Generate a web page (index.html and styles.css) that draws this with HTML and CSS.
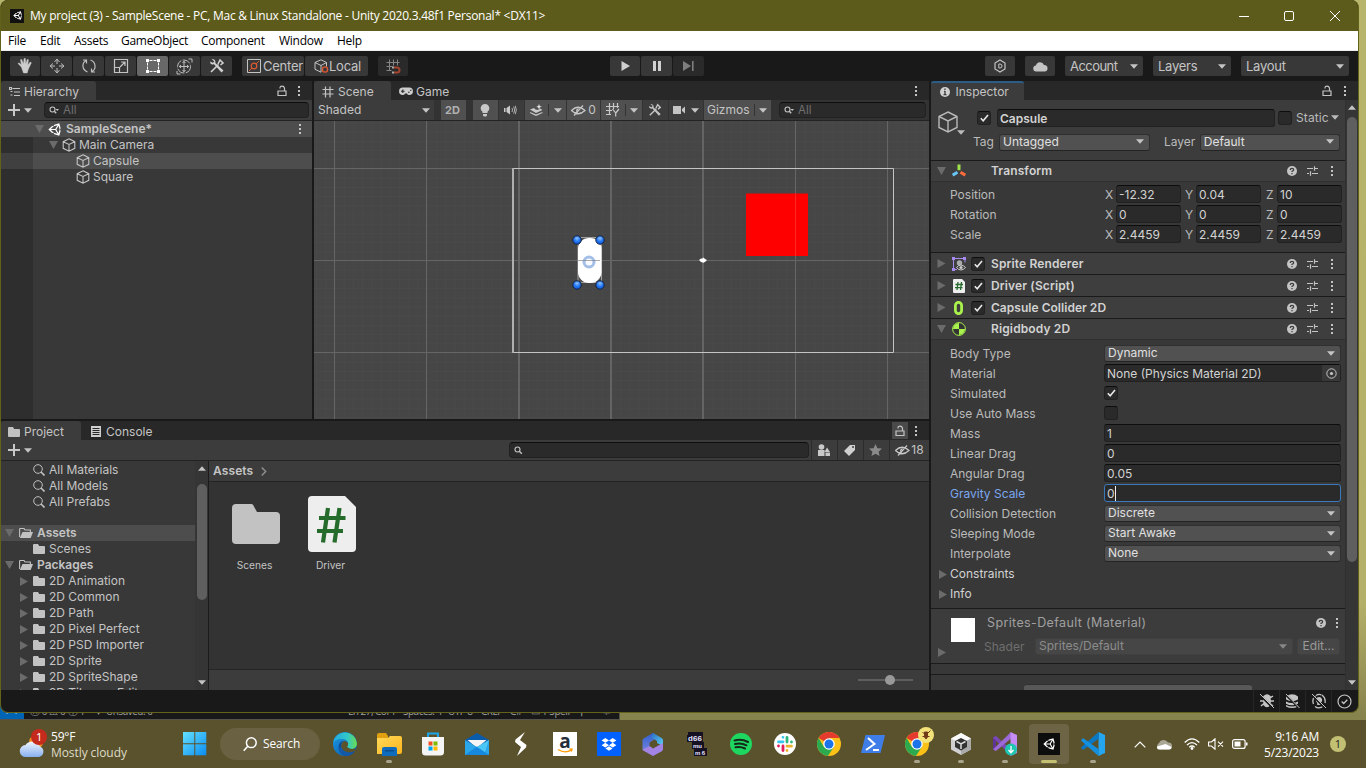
FILE: index.html
```html
<!DOCTYPE html>
<html lang="en">
<head>
<meta charset="utf-8">
<title>My project (3) - SampleScene</title>
<link rel="stylesheet" href="styles.css">
</head>
<body>
<svg class="defs" width="0" height="0">
  <symbol id="cube" viewBox="0 0 14 14"><path d="M7 .8 12.800 3.700V10.300L7 13.200 1.200 10.300V3.700ZM1.200 3.700 7 6.500l5.800-2.800M7 6.500v6.700" fill="none" stroke="currentColor" stroke-width="1.100"/></symbol>
  <symbol id="lock" viewBox="0 0 10 12"><path d="M1 6h8v4.500H1zM3 3.500V2.700Q3 1.200 5 1.200T7.500 3.200V6" fill="none" stroke="currentColor" stroke-width="1.200"/></symbol>
  <symbol id="dots" viewBox="0 0 4 12"><path d="M1 1h2v2H1zM1 5h2v2H1zM1 9h2v2H1z" fill="currentColor"/></symbol>
  <symbol id="down" viewBox="0 0 8 5"><path d="M0 .3h8L4 4.800z" fill="currentColor"/></symbol>
  <symbol id="up" viewBox="0 0 8 5"><path d="M0 4.700h8L4 .2z" fill="currentColor"/></symbol>
  <symbol id="open" viewBox="0 0 9 8"><path d="M0 0h9L4.500 8z" fill="#6b6b6b"/></symbol>
  <symbol id="shut" viewBox="0 0 8 9"><path d="M0 0v9l8-4.500z" fill="#6b6b6b"/></symbol>
  <symbol id="folder" viewBox="0 0 12 10"><path d="M0 1q0-1 1-1h4l1.200 2H11q1 0 1 1v6q0 1-1 1H1q-1 0-1-1z" fill="#c2c2c2"/></symbol>
  <symbol id="folderopen" viewBox="0 0 14 10"><path d="M.6 9V1.200q0-.7.7-.7H5l1 1.500h5.400V4" fill="none" stroke="#c2c2c2" stroke-width="1.100"/><path d="M3.500 4H14l-2.300 6H.8z" fill="#c2c2c2"/></symbol>
  <symbol id="mag" viewBox="0 0 12 12"><circle cx="5" cy="5" r="4.300" fill="none" stroke="#c2c2c2"/><path d="m8 8 3.500 3.500" stroke="#c2c2c2" stroke-width="1.600"/></symbol>
  <symbol id="smagd" viewBox="0 0 10 9"><circle cx="3.500" cy="3.500" r="2.500" fill="none" stroke="#c4c4c4" stroke-width="1.100"/><path d="m5.300 5.300 1.900 2" stroke="#c4c4c4" stroke-width="1.400"/><path d="M6.500 3H10L8.200 5z" fill="#c4c4c4"/></symbol>
  <symbol id="smag" viewBox="0 0 9 9"><circle cx="3.500" cy="3.500" r="2.500" fill="none" stroke="#c4c4c4" stroke-width="1.100"/><path d="m5.300 5.300 2.500 2.500" stroke="#c4c4c4" stroke-width="1.400"/></symbol>
  <symbol id="check" viewBox="0 0 9 8"><path d="m.8 4.200 2.400 2.500L8 1" fill="none" stroke="#e8e8e8" stroke-width="1.600"/></symbol>
  <symbol id="help" viewBox="0 0 10 10"><circle cx="5" cy="5" r="5" fill="#c4c4c4"/><path d="M3.300 4Q3.300 2.300 5 2.300T6.700 3.800Q6.700 4.700 5 5.400V6M5 7v1.200" fill="none" stroke="#3c3c3c" stroke-width="1.200"/></symbol>
  <symbol id="preset" viewBox="0 0 11 10"><path d="M0 2.500h6M8 2.500h3M7.500.2v4.600M0 7.500h2M5 7.500h6M3.500 5.200v4.600" stroke="#c4c4c4" stroke-width="1.200" fill="none"/></symbol>
  <symbol id="plus" viewBox="0 0 12 12"><path d="M6 0v12M0 6h12" stroke="#c8c8c8" stroke-width="2"/></symbol>
  <symbol id="grid" viewBox="0 0 12 12"><path d="M3.500.5v11M8 .5v11M.5 3.500h11M.5 8h11" stroke="currentColor" stroke-width="1.200"/></symbol>
  <symbol id="tools" viewBox="0 0 16 16"><path d="M2 14 9.500 6.500M9 6l2-4 3 3-2.500 2" stroke="currentColor" stroke-width="1.600" fill="none"/><path d="m2.600 1 2.700 2.500-1.300 1.300L1 3.500Q1 6 3.400 6.500L5 6.300l7.500 8.200 2-2L6.400 5Q7 1 2.600 1z" fill="currentColor"/></symbol>
  <symbol id="unity" viewBox="0 0 512 512"><path fill="currentColor" fill-rule="evenodd" d="M498.100 206.400 445.300 14.700 248.200 66.100 219 116.100l-59.200-.4L15.500 256l144.300 140.300 59.200-.4 29.200 50 197.100 51.400 52.800-191.600-30-49.700ZM223.800 124.200l150.700-37.700L288 232.300H114.900Zm0 263.600L114.900 279.700H288l86.500 145.800Zm193 14L330.200 256l86.600-145.800L458.600 256Z"/></symbol>
  <symbol id="chrome" viewBox="0 0 24 24"><circle cx="12" cy="12" r="12" fill="#fbc116"/><path d="M12 12 1.600 6A12 12 0 0 1 22.400 6H12z" fill="#e33b2e"/><path d="M1.600 6a12 12 0 0 0 9.300 18L17 14.800 12 12 6.700 14.600z" fill="#2da94f"/><circle cx="12" cy="12" r="5.800" fill="#fff"/><circle cx="12" cy="12" r="4.500" fill="#1a73e8"/></symbol>
  <linearGradient id="blue" x1="0" y1="0" x2="1" y2="1"><stop stop-color="#64e1ff"/><stop offset="1" stop-color="#0b8cf0"/></linearGradient>
  <linearGradient id="sky" x1="0" y1="0" x2="0" y2="1"><stop stop-color="#f0f5ff"/><stop offset="1" stop-color="#87b0ee"/></linearGradient>
  <linearGradient id="yel" x1="0" y1="0" x2="1" y2="1"><stop stop-color="#ffd95a"/><stop offset="1" stop-color="#fcb51c"/></linearGradient>
  <linearGradient id="edgeA" x1="0" y1="0" x2="1" y2="0"><stop stop-color="#23a9df"/><stop offset=".6" stop-color="#33c8c9"/><stop offset="1" stop-color="#6bdc4c"/></linearGradient>
  <linearGradient id="edgeB" x1="0" y1="0" x2="1" y2="1"><stop stop-color="#1b9ee8"/><stop offset="1" stop-color="#0b4fa0"/></linearGradient>
  <linearGradient id="m365a" x1="0" y1="0" x2="0" y2="1"><stop stop-color="#2f62cc"/><stop offset="1" stop-color="#6f7fe0"/></linearGradient>
  <linearGradient id="m365b" x1="0" y1="0" x2="1" y2="1"><stop stop-color="#2c6fc4"/><stop offset="1" stop-color="#5cd0f5"/></linearGradient>
  <radialGradient id="ball" cx=".5" cy=".3" r=".8"><stop stop-color="#8cc0ff"/><stop offset=".5" stop-color="#1f74f0"/><stop offset="1" stop-color="#0a50d8"/></radialGradient>
  <pattern id="fine" x="334.500" y="168.500" width="9.220" height="9.200" patternUnits="userSpaceOnUse"><path d="M0 .5h9.220M.5 0v9.200" stroke="#494949"/></pattern>
</svg>

<div class="desktop">
  <div class="backwin">
    <div class="remote">&gt;&lt;</div>
    <span class="bw1">ⓧ 0 ⚠ 0 ⓘ 1</span><span class="bw2">▾</span><span class="bw3">Unsaved: 0</span>
    <span class="bw4">Ln 27, Col 1</span><span class="bw5">Spaces: 4</span><span class="bw6">UTF-8</span><span class="bw7">CRLF</span><span class="bw8">C#</span><span class="bw9">▭ 1 Spell</span><span class="bw10">⚲</span><span class="bw11">♧</span>
  </div>

  <div class="window">
    <header class="title">
      <span class="appicon"><svg width="9" height="9"><use href="#unity"/></svg></span>
      <span class="title-text">My project (3) - SampleScene - PC, Mac &amp; Linux Standalone - Unity 2020.3.48f1 Personal* &lt;DX11&gt;</span>
      <svg class="winbtns" width="102" height="12" viewBox="0 0 102 12" fill="none" stroke="#fff"><path d="M0 6.500h10"/><rect x="45.500" y="1.500" width="9" height="9" rx="1.500"/><path d="m91 1 10 10M101 1 91 11"/></svg>
    </header>
    <nav class="menu"><span class="m1">File</span><span class="m2">Edit</span><span class="m3">Assets</span><span class="m4">GameObject</span><span class="m5">Component</span><span class="m6">Window</span><span class="m7">Help</span></nav>

    <div class="toolbar">
      <div class="group">
        <span class="tb w30"><svg width="16" height="16" viewBox="0 0 16 16"><path d="M4.300 9 1 5.600l1-.8 2.500 2L3.400 1.700l1.300-.3L6.500 6 7 .5h1.400L8.700 6l1.500-4.600 1.300.3-.8 5.300 2.500-3 1.200.8-3 6.200-1.200 4H6.500Z" fill="#cdcdcd" stroke="#cdcdcd" stroke-width=".4"/></svg></span>
        <span class="tb w31"><svg width="16" height="16" viewBox="0 0 16 16"><path d="M8 2v4M8 10v4M2 8h4M10 8h4M5.500 4 8 1l2.500 3M5.500 12 8 15l2.500-3M4 5.500 1 8l3 2.500M12 5.500 15 8l-3 2.500" stroke="#bdbdbd" fill="none"/></svg></span>
        <span class="tb w31"><svg width="16" height="16" viewBox="0 0 16 16"><path d="M6.500 14C1 12 .500 5 5 2.500M2 2h3.500v3.500M9.500 2c5.500 2 6 9 1.500 11.500M14 14h-3.500v-3.500" stroke="#bdbdbd" stroke-width="1.200" fill="none"/></svg></span>
        <span class="tb w31"><svg width="16" height="16" viewBox="0 0 16 16"><path d="M1.500 1.500h13v13h-13zM1.500 9.500h5v5M7 9l4.500-4.500M8 4h4v4" stroke="#c4c4c4" stroke-width="1.200" fill="none"/></svg></span>
        <span class="tb w31 sel"><svg width="16" height="16" viewBox="0 0 16 16"><path d="M4.500 2.500h7M4.500 13.500h7M2.500 4.500v7M13.500 4.500v7" stroke="#fff" stroke-dasharray="3 1"/><path d="M1 1h3v3H1zM12 1h3v3h-3zM1 12h3v3H1zM12 12h3v3h-3z" fill="#fff"/></svg></span>
        <span class="tb w31"><svg width="17" height="17" viewBox="0 0 17 17"><g fill="none" stroke="#bdbdbd"><circle cx="8" cy="8.500" r="6.500" stroke-dasharray="8 1.500"/><path d="M8 3v11M3 8.500h10M6.500 5 8 3.300 9.500 5M6.500 12 8 13.700 9.500 12M5 7 3.300 8.500 5 10M11 7l1.700 1.500L11 10M12.500 1H16v3.500M1 13v3h3.500"/></g></svg></span>
        <span class="tb w31"><svg class="bright" width="16" height="16"><use href="#tools"/></svg></span>
        <span class="tb pivot"><svg width="14" height="14" viewBox="0 0 14 14"><path d="M.5.500h13v13H.5z" fill="none" stroke="#c4c4c4"/><path d="m2 12 10-10" stroke="#df5a32"/><circle cx="7" cy="7" r="2.800" fill="#383838" stroke="#df5a32" stroke-width="1.200"/></svg><b>Center</b></span>
        <span class="tb local"><svg width="15" height="14" viewBox="0 0 15 14"><path d="M7 .8 12.500 3.500v4M7 13.200 1 10.300V3.500L7 .8M1 3.500 7 6.500l5.500-3M7 6.500v6.700" stroke="#c4c4c4" fill="none"/><circle cx="11" cy="10.500" r="2.600" fill="none" stroke="#df5a32" stroke-width="1.400"/></svg><b>Local</b></span>
        <span class="tb snap"><svg width="15" height="15" viewBox="0 0 15 15"><path d="M3.500.5v11M7.500.500v6M11.500.5v6M.5 3.500h13M.5 7.500h6M.5 11.500h5" stroke="#858585" fill="none"/><path d="M8 8.500h3a2.200 2.200 0 0 1 0 5H8" fill="none" stroke="#a14430" stroke-width="2"/><path d="M6 7.500h2v2H6zM6 12.500h2v2H6z" fill="#aaa"/></svg></span>
      </div>
      <div class="group play">
        <span class="tb w30"><svg width="9" height="10" viewBox="0 0 9 10"><path d="M.5 0v10L9 5z" fill="#d0d0d0"/></svg></span>
        <span class="tb w31"><svg width="8" height="10" viewBox="0 0 8 10"><path d="M0 0h3v10H0zM5 0h3v10H5z" fill="#d0d0d0"/></svg></span>
        <span class="tb w31 dim"><svg width="11" height="10" viewBox="0 0 11 10"><path d="M0 0v10l8-5zM9 0h1.600v10H9z" fill="#7e7e7e"/></svg></span>
      </div>
      <div class="group right">
        <span class="tb w30"><svg width="12" height="14" viewBox="0 0 12 14"><path d="m6 1 5 3v6l-5 3-5-3V4z" fill="none" stroke="#c4c4c4" stroke-width="1.200"/><path d="M4.800 5H6a2 2 0 0 1 0 4H4.800z" fill="none" stroke="#c4c4c4"/></svg></span>
        <span class="tb w30"><svg width="15" height="11" viewBox="0 0 15 11"><path d="M3.500 10.500a3 3 0 0 1-.5-6A4.200 4.200 0 0 1 11 4a3.300 3.300 0 0 1 1 6.500z" fill="#c4c4c4"/></svg></span>
        <span class="tb dd w78"><b class="acc">Account</b><svg width="8" height="5"><use href="#down"/></svg></span>
        <span class="tb dd w78"><b>Layers</b><svg width="8" height="5"><use href="#down"/></svg></span>
        <span class="tb dd w108"><b>Layout</b><svg width="8" height="5"><use href="#down"/></svg></span>
      </div>
    </div>

    <main class="dock">
      <div class="leftcol">
        <div class="toprow">
          <section class="hier">
            <div class="tabs">
              <span class="tab th"><svg width="12" height="10" viewBox="0 0 12 10"><path d="M3.500 1.500H11M5 5h6M5 8.500h6M.5.500h2v2h-2zM1.500 4.500h2M1.500 8h2" stroke="#c4c4c4" fill="none" stroke-width="1.100"/></svg>Hierarchy</span>
              <span class="tabend"><svg width="10" height="12"><use href="#lock"/></svg><svg width="4" height="12"><use href="#dots"/></svg></span>
            </div>
            <div class="bar">
              <svg class="add" width="12" height="12"><use href="#plus"/></svg><svg class="addc" width="8" height="5"><use href="#down"/></svg>
              <span class="search hs"><svg width="10" height="9"><use href="#smagd"/></svg>All</span>
            </div>
            <div class="hrows">
              <div class="hrow lit h0"><svg width="9" height="8"><use href="#open"/></svg><svg class="white" width="13" height="13"><use href="#unity"/></svg><strong>SampleScene*</strong><svg class="rowdots" width="4" height="12"><use href="#dots"/></svg></div>
              <div class="hrow h1"><svg width="9" height="8"><use href="#open"/></svg><svg width="14" height="14"><use href="#cube"/></svg>Main Camera</div>
              <div class="hrow h2 lit2"><svg width="14" height="14"><use href="#cube"/></svg>Capsule</div>
              <div class="hrow h2"><svg width="14" height="14"><use href="#cube"/></svg>Square</div>
            </div>
          </section>

          <section class="scene">
            <div class="tabs">
              <span class="tab ts"><svg width="12" height="12"><use href="#grid"/></svg>Scene</span>
              <span class="tab off tg"><svg width="14" height="9" viewBox="0 0 14 9"><path d="M3.800.5h6.400a3.600 3.600 0 0 1 0 7.500Q8.500 8 8 6.500H6Q5.500 8 3.800 8a3.600 3.600 0 0 1 0-7.500z" fill="#cdcdcd"/><path d="M2 4.200h3.600M3.800 2.400V6M9 5.200h1.600M11 3.200h1.500" stroke="#282828" stroke-width="1.100"/></svg>Game</span>
              <span class="tabend one"><svg width="4" height="12"><use href="#dots"/></svg></span>
            </div>
            <div class="bar sbar">
              <span class="sb shaded">Shaded<svg width="8" height="5"><use href="#down"/></svg></span>
              <span class="sb on two">2D</span>
              <span class="sb on lamp"><svg width="10" height="13" viewBox="0 0 10 13"><path d="M5 0a4.300 4.300 0 0 1 2.500 7.800V9h-5V7.800A4.300 4.300 0 0 1 5 0zM3 10h4v1.500L6 12.500H4L3 11.500z" fill="#c9c9c9"/></svg></span>
              <span class="sb s25"><svg width="13" height="10" viewBox="0 0 13 10"><path d="M0 3h1.500v4H0zM2.500 3 6 .500v9L2.500 7z" fill="#c9c9c9"/><path d="M8 3q1 2 0 4M9.700 1.500q2 3.500 0 7M11.300.800q2 4.200 0 8.400" stroke="#b0b0b0" fill="none"/></svg></span>
              <span class="sb on s41"><svg width="13" height="12" viewBox="0 0 13 12"><path d="m0 5.500 4-1.500 1.500 1.500L8 6l2-1.500L12.500 6 6 9zM0 8l6 2.500L12.500 8v1L6 12 0 9z" fill="#c9c9c9"/><path d="m9 0 .8 2 2 .8-2 .8L9 5.600l-.8-2-2-.8 2-.8z" fill="#e0e0e0"/></svg><i></i><svg width="8" height="5"><use href="#down"/></svg></span>
              <span class="sb on s33"><svg width="15" height="11" viewBox="0 0 15 11"><path d="M.5 5.500Q7 -1 14 5.500 7 12 .5 5.500zM3 10.500 12 .5" fill="none" stroke="#c9c9c9" stroke-width="1.200"/><path d="M5 6.500q0-3.300 3-3.300L5.500 7z" fill="#c9c9c9"/></svg>0</span>
              <span class="sb on s41"><svg width="14" height="14" viewBox="0 0 14 14"><path d="M3.500 0v11M7.500 0v6M11.500 0v5M0 3.500h13M0 7.500h6M0 11.500h5M6.500 6l3.200 4v3.500M13 6 9.700 10" stroke="#c9c9c9" stroke-width="1.200" fill="none"/></svg><i></i><svg width="8" height="5"><use href="#down"/></svg></span>
              <span class="sb s25 tl"><svg width="14" height="14"><use href="#tools"/></svg></span>
              <span class="sb s34"><svg width="12" height="8" viewBox="0 0 12 8"><path d="M0 0h8v8H0zM9 3l3-2.500v7L9 5z" fill="#c4c4c4"/></svg><svg width="8" height="5"><use href="#down"/></svg></span>
              <span class="sb on giz">Gizmos<i></i><svg width="8" height="5"><use href="#down"/></svg></span>
              <span class="search ss"><svg width="10" height="9"><use href="#smagd"/></svg>All</span>
            </div>
            <svg class="view" width="615" height="298" viewBox="314 121 615 298">
              <rect x="314" y="121" width="615" height="298" fill="#464646"/>
              <rect x="314" y="121" width="615" height="298" fill="url(#fine)"/>
              <path d="M334.500 121v298M426.500 121v298M795.500 121v298M887.500 121v298M314 168.500h615M314 260.500h615M314 352.500h615" stroke="#656565"/>
              <path d="M519 121v298M611 121v298M703 121v298" stroke="#646464" stroke-width="2"/>
              <rect x="746" y="193.500" width="62" height="62.500" fill="#f00"/><path d="M795.500 193v63" stroke="#ff2626"/>
              <path d="M513 168.500H893.500V352.500H513" fill="none" stroke="#c4c4c4"/><path d="M513 168v185" stroke="#b0b0b0" stroke-width="2"/>
              <rect x="578" y="237.500" width="23.500" height="45" fill="#505050" stroke="#a0a0a0"/>
              <rect x="578" y="238" width="23.500" height="45" rx="11" fill="#fff"/>
              <circle cx="589" cy="262" r="5" fill="#f8fafd" stroke="#a3bfe8" stroke-width="3"/>
              <path d="M578 260.500h22" stroke="#777" stroke-opacity=".6"/>
              <g fill="url(#ball)" stroke="#14233f"><circle cx="577" cy="240" r="4.200"/><circle cx="600" cy="240" r="4.200"/><circle cx="577" cy="285" r="4.200"/><circle cx="600" cy="285" r="4.200"/></g>
              <path d="m699 260 2-1.500h1.500l1-1 1.500 1.500 2 1-1.500 1.500-2 1.200-2.500-.8z" fill="#fff"/>
            </svg>
          </section>
        </div>

        <section class="project">
          <div class="tabs">
            <span class="tab tp"><svg width="12" height="10"><use href="#folder"/></svg>Project</span>
            <span class="tab off tc"><svg width="10" height="11" viewBox="0 0 10 11"><path d="M0 0h10v11H0z" fill="#d0d0d0"/><path d="M1.500 2.500h7M1.500 4.500h7M1.500 6.500h7M1.500 8.500h7" stroke="#282828"/></svg>Console</span>
            <span class="tabend pl"><em><svg width="10" height="12"><use href="#lock"/></svg></em><svg width="4" height="12"><use href="#dots"/></svg></span>
          </div>
          <div class="bar">
            <svg class="add" width="12" height="12"><use href="#plus"/></svg><svg class="addc" width="8" height="5"><use href="#down"/></svg>
            <span class="search ps"><svg width="9" height="9"><use href="#smag"/></svg></span>
            <span class="pbtn"><svg width="12" height="12" viewBox="0 0 12 12"><circle cx="3.500" cy="3" r="2.800" fill="#c9c9c9"/><path d="M0 6h6.500v6H0zM9 3.500l3 4.500H6.500zM7.500 8.500H12V12H7.500z" fill="#c9c9c9"/></svg></span>
            <span class="pbtn"><svg width="12" height="12" viewBox="0 0 12 12"><path d="M6 1h5v5L5 12 0 7z" fill="#d0d0d0"/><circle cx="9" cy="3" r="1" fill="#3c3c3c"/></svg></span>
            <span class="pbtn"><svg width="13" height="12" viewBox="0 0 13 12"><path d="m6.500 0 1.900 4.200 4.600.4L9.600 7.700l1 4.300-4.100-2.300L2.400 12l1-4.300L0 4.600l4.600-.4z" fill="#8a8a8a"/></svg></span>
            <span class="pbtn eye"><svg width="15" height="11" viewBox="0 0 15 11"><path d="M.5 5.500Q7 -1 14 5.500 7 12 .5 5.500zM3 10.500 12 .5" fill="none" stroke="#c9c9c9" stroke-width="1.200"/><path d="M5 6.500q0-3.300 3-3.300L5.500 7z" fill="#c9c9c9"/></svg>18</span>
          </div>
          <div class="pbody">
            <div class="tree">
              <div class="tr t1"><svg width="12" height="12"><use href="#mag"/></svg>All Materials</div>
              <div class="tr t1"><svg width="12" height="12"><use href="#mag"/></svg>All Models</div>
              <div class="tr t1"><svg width="12" height="12"><use href="#mag"/></svg>All Prefabs</div>
              <div class="tr t0 lit first"><svg width="9" height="8"><use href="#open"/></svg><svg width="14" height="10"><use href="#folderopen"/></svg><strong>Assets</strong></div>
              <div class="tr t1"><svg width="12" height="10"><use href="#folder"/></svg>Scenes</div>
              <div class="tr t0"><svg width="9" height="8"><use href="#open"/></svg><svg width="14" height="10"><use href="#folderopen"/></svg><strong>Packages</strong></div>
              <div class="tr t2"><svg width="8" height="9"><use href="#shut"/></svg><svg width="12" height="10"><use href="#folder"/></svg>2D Animation</div>
              <div class="tr t2"><svg width="8" height="9"><use href="#shut"/></svg><svg width="12" height="10"><use href="#folder"/></svg>2D Common</div>
              <div class="tr t2"><svg width="8" height="9"><use href="#shut"/></svg><svg width="12" height="10"><use href="#folder"/></svg>2D Path</div>
              <div class="tr t2"><svg width="8" height="9"><use href="#shut"/></svg><svg width="12" height="10"><use href="#folder"/></svg>2D Pixel Perfect</div>
              <div class="tr t2"><svg width="8" height="9"><use href="#shut"/></svg><svg width="12" height="10"><use href="#folder"/></svg>2D PSD Importer</div>
              <div class="tr t2"><svg width="8" height="9"><use href="#shut"/></svg><svg width="12" height="10"><use href="#folder"/></svg>2D Sprite</div>
              <div class="tr t2"><svg width="8" height="9"><use href="#shut"/></svg><svg width="12" height="10"><use href="#folder"/></svg>2D SpriteShape</div>
              <div class="tr t2"><svg width="8" height="9"><use href="#shut"/></svg><svg width="12" height="10"><use href="#folder"/></svg>2D Tilemap Editor</div>
            </div>
            <div class="scroll"><svg width="8" height="5"><use href="#up"/></svg><i class="thumb tt"></i><svg width="8" height="5"><use href="#down"/></svg></div>
            <div class="assets">
              <div class="crumb"><strong>Assets</strong><svg width="6" height="9" viewBox="0 0 6 9"><path d="m.7.500 4 4-4 4" fill="none" stroke="#8c8c8c" stroke-width="1.500"/></svg></div>
              <div class="tiles">
                <figure><svg width="48" height="56" viewBox="0 0 48 56"><path d="M0 12q0-4 4-4h15.500q1 0 1.500.8L25 16h19q4 0 4 4v24q0 4-4 4H4q-4 0-4-4z" fill="#c2c2c2"/></svg><figcaption>Scenes</figcaption></figure>
                <figure><svg width="48" height="56" viewBox="0 0 48 56"><path d="M0 4q0-4 4-4h33l11 11v41q0 4-4 4H4q-4 0-4-4z" fill="#eee"/><path d="m20 12-5 34.500M31.500 12l-5 34.500M11 22h26.500M9 35h26" stroke="#256b2b" stroke-width="4.200" fill="none"/></svg><figcaption>Driver</figcaption></figure>
              </div>
              <div class="foot"><svg width="56" height="12" viewBox="0 0 56 12"><path d="M0 6h55" stroke="#5e5e5e" stroke-width="2"/><circle cx="32" cy="6" r="5" fill="#999"/></svg></div>
            </div>
          </div>
        </section>
      </div>

      <section class="insp">
        <div class="tabs">
          <span class="tab ti"><svg width="10" height="10" viewBox="0 0 10 10"><circle cx="5" cy="5" r="5" fill="#d0d0d0"/><path d="M5 1.500v1.500M5 4v3.500M3.500 7.700h3M4 4.300h1" stroke="#3c3c3c" stroke-width="1.300"/></svg>Inspector</span>
          <span class="tabend il"><svg width="10" height="12"><use href="#lock"/></svg><svg width="4" height="12"><use href="#dots"/></svg></span>
        </div>
        <div class="ibody">
          <div class="icontent">
            <div class="obj">
              <div class="objicon"><svg width="20" height="22" viewBox="0 0 20 22"><path d="m10 1 9 4.500v11L10 21l-9-4.500v-11ZM1 5.500l9 4.500 9-4.500M10 10v11" fill="none" stroke="#b8b8b8" stroke-width="1.400"/></svg><svg class="oc" width="8" height="5"><use href="#down"/></svg></div>
              <div class="objmain">
                <div class="o1"><span class="cb"><svg width="9" height="8"><use href="#check"/></svg></span><span class="fld name"><strong>Capsule</strong></span><span class="cb"></span><span class="static">Static</span><svg width="8" height="5"><use href="#down"/></svg></div>
                <div class="o2"><label>Tag</label><span class="drop tagd">Untagged<svg width="8" height="5"><use href="#down"/></svg></span><label class="lay">Layer</label><span class="drop layd">Default<svg width="8" height="5"><use href="#down"/></svg></span></div>
              </div>
            </div>
            <div class="comp"><svg width="9" height="8"><use href="#open"/></svg><svg class="ci" width="14" height="14" viewBox="0 0 14 14"><path d="M7 .5v5.700" stroke="#9fe24b" stroke-width="3"/><path d="m5.500 8.300-4.800 2.900" stroke="#67c6f5" stroke-width="3"/><path d="m8.500 8.300 4.800 2.900" stroke="#ff6b3c" stroke-width="3"/></svg><span class="nocb"></span><strong>Transform</strong><svg width="10" height="10"><use href="#help"/></svg><svg width="11" height="10"><use href="#preset"/></svg><svg width="4" height="12"><use href="#dots"/></svg></div>
            <div class="vecs">
              <div class="vec"><label>Position</label><u>X</u><span class="fld">-12.32</span><u>Y</u><span class="fld">0.04</span><u>Z</u><span class="fld">10</span></div>
              <div class="vec"><label>Rotation</label><u>X</u><span class="fld">0</span><u>Y</u><span class="fld">0</span><u>Z</u><span class="fld">0</span></div>
              <div class="vec"><label>Scale</label><u>X</u><span class="fld">2.4459</span><u>Y</u><span class="fld">2.4459</span><u>Z</u><span class="fld">2.4459</span></div>
            </div>
            <div class="comp c2"><svg width="8" height="9"><use href="#shut"/></svg><svg class="ci" width="14" height="14" viewBox="0 0 14 14"><path d="M1.500 1v12M1 1.500h12v4M1 12.500h4" stroke="#a68af0" fill="none"/><path d="M0 0h3v3H0zM11 0h3v3h-3zM0 11h3v3H0z" fill="#a68af0"/><circle cx="7.500" cy="6" r="2.700" fill="#aaa"/><path d="M4.500 10.500q4.500-5 9 0-4.500 5-9 0z" fill="#3c3c3c" stroke="#ccc"/><circle cx="9" cy="10.500" r="1.600" fill="#ccc"/></svg><span class="cb"><svg width="9" height="8"><use href="#check"/></svg></span><strong>Sprite Renderer</strong><svg width="10" height="10"><use href="#help"/></svg><svg width="11" height="10"><use href="#preset"/></svg><svg width="4" height="12"><use href="#dots"/></svg></div>
            <div class="comp c2"><svg width="8" height="9"><use href="#shut"/></svg><svg class="ci" width="14" height="14" viewBox="0 0 14 14"><path d="M1 1q0-1 1-1h8l3 3v10q0 1-1 1H2q-1 0-1-1z" fill="#eee"/><path d="M6 3 5 11M9.500 3l-1 8M3.500 5.500h7.500M3 8.700h7.500" stroke="#256b2b" stroke-width="1.300"/></svg><span class="cb"><svg width="9" height="8"><use href="#check"/></svg></span><strong>Driver (Script)</strong><svg width="10" height="10"><use href="#help"/></svg><svg width="11" height="10"><use href="#preset"/></svg><svg width="4" height="12"><use href="#dots"/></svg></div>
            <div class="comp c2"><svg width="8" height="9"><use href="#shut"/></svg><svg class="ci" width="14" height="14" viewBox="0 0 14 14"><rect x="3.400" y="1.300" width="6.200" height="11.400" rx="3.100" fill="none" stroke="#a8f04c" stroke-width="2.800"/></svg><span class="cb"><svg width="9" height="8"><use href="#check"/></svg></span><strong class="tight">Capsule Collider 2D</strong><svg width="10" height="10"><use href="#help"/></svg><svg width="11" height="10"><use href="#preset"/></svg><svg width="4" height="12"><use href="#dots"/></svg></div>
            <div class="comp c2 last"><svg width="9" height="8"><use href="#open"/></svg><svg class="ci" width="14" height="14" viewBox="0 0 14 14"><circle cx="7" cy="7" r="6.400" fill="#333" stroke="#a8f04c"/><path d="M7 7V1A6 6 0 0 0 1 7zM7 7v6a6 6 0 0 0 6-6z" fill="#a8f04c"/></svg><span class="nocb"></span><strong>Rigidbody 2D</strong><svg width="10" height="10"><use href="#help"/></svg><svg width="11" height="10"><use href="#preset"/></svg><svg width="4" height="12"><use href="#dots"/></svg></div>
            <div class="props">
              <div class="prop"><label>Body Type</label><span class="drop">Dynamic<svg width="8" height="5"><use href="#down"/></svg></span></div>
              <div class="prop"><label>Material</label><span class="fld objf"><span>None (Physics Material 2D)</span><em><svg width="11" height="11" viewBox="0 0 11 11"><circle cx="5.500" cy="5.500" r="4.700" fill="none" stroke="#c4c4c4"/><circle cx="5.500" cy="5.500" r="1.600" fill="#c4c4c4"/></svg></em></span></div>
              <div class="prop"><label>Simulated</label><span class="cb"><svg width="9" height="8"><use href="#check"/></svg></span></div>
              <div class="prop"><label>Use Auto Mass</label><span class="cb"></span></div>
              <div class="prop"><label>Mass</label><span class="fld">1</span></div>
              <div class="prop"><label>Linear Drag</label><span class="fld">0</span></div>
              <div class="prop"><label>Angular Drag</label><span class="fld">0.05</span></div>
              <div class="prop focus"><label>Gravity Scale</label><span class="fld">0<i class="caret"></i></span></div>
              <div class="prop"><label>Collision Detection</label><span class="drop">Discrete<svg width="8" height="5"><use href="#down"/></svg></span></div>
              <div class="prop"><label>Sleeping Mode</label><span class="drop">Start Awake<svg width="8" height="5"><use href="#down"/></svg></span></div>
              <div class="prop"><label>Interpolate</label><span class="drop">None<svg width="8" height="5"><use href="#down"/></svg></span></div>
              <div class="prop fold"><svg width="8" height="9"><use href="#shut"/></svg><label>Constraints</label></div>
              <div class="prop fold"><svg width="8" height="9"><use href="#shut"/></svg><label>Info</label></div>
            </div>
            <div class="mat">
              <div class="swc"><div class="swatch"></div><svg width="8" height="9"><use href="#shut"/></svg></div>
              <div class="matmain">
                <div class="mt"><span>Sprites-Default (Material)</span><svg width="10" height="10"><use href="#help"/></svg><svg width="4" height="12"><use href="#dots"/></svg></div>
                <div class="ms"><label>Shader</label><span class="drop">Sprites/Default<svg width="8" height="5"><use href="#down"/></svg></span><span class="drop edit">Edit...</span></div>
              </div>
            </div>
            <div class="strip"></div>
            <div class="addrow"><span></span></div>
          </div>
          <div class="scroll is"><svg width="8" height="5"><use href="#up"/></svg><i class="thumb it"></i><svg width="8" height="5"><use href="#down"/></svg></div>
        </div>
      </section>
    </main>

    <footer class="status">
      <span><svg width="16" height="16" viewBox="0 0 16 16"><path d="M5 3.500q3-3 6 0v8q-3 4-6 0zM2 3l3 2M1 8h4M2 13l3-2.500M14 3l-3 2M15 8h-4M14 13l-3-2.500" fill="#c4c4c4" stroke="#c4c4c4" stroke-width="1.500"/><path d="m1 2 13 13" stroke="#191919" stroke-width="2"/><path d="M1 1l14 14" stroke="#c4c4c4"/></svg></span>
      <span><svg width="15" height="16" viewBox="0 0 15 16"><path d="M1 3.500q6.500-4.500 12 0v3Q7 10 1 6.500zM1 8.500q6 3 12 0v2.200q-6 3-12 0zM1 12q6 3 12 0v1.500q-6 3-12 0z" fill="#c4c4c4"/><path d="m1 2 13 13" stroke="#191919" stroke-width="2"/><path d="M1 1l13.500 14" stroke="#c4c4c4"/></svg></span>
      <span><svg width="16" height="16" viewBox="0 0 16 16"><path d="M2.500 11Q.5 6 4.500 3M4 13.500q4 3 8.500-.5M11 2q4 3 3 8M5 2.500Q8 .5 10.500 2" stroke="#c4c4c4" fill="none" stroke-width="1.300"/><path d="M8 4a3.300 3.300 0 0 1 1.800 6V12H6.200v-2A3.300 3.300 0 0 1 8 4z" fill="#c4c4c4"/><path d="m1 2 13 13" stroke="#191919" stroke-width="2"/><path d="M1 1l14 14" stroke="#c4c4c4"/></svg></span>
      <span><svg width="15" height="15" viewBox="0 0 15 15"><circle cx="7.500" cy="7.500" r="6.500" fill="none" stroke="#c4c4c4" stroke-width="1.200"/><path d="m4.700 7.500 2 2 3.600-3.700" fill="none" stroke="#c4c4c4" stroke-width="1.300"/></svg></span>
    </footer>
  </div>

  <footer class="taskbar">
    <div class="weather">
      <svg width="28" height="30" viewBox="0 0 28 30"><circle cx="17" cy="13" r="7" fill="#f59127"/><path d="M7 28a6 6 0 0 1-.5-12A8.500 8.500 0 0 1 21 17.500 5.500 5.500 0 0 1 20 28z" fill="url(#sky)"/><circle cx="20" cy="8" r="8" fill="#c42b1c"/><text x="20" y="12" text-anchor="middle" font-size="11" fill="#fff" font-family="Noto Sans,sans-serif">1</text></svg>
      <div><p>59°F</p><p class="mc">Mostly cloudy</p></div>
    </div>
    <svg class="start" width="24" height="24" viewBox="0 0 24 24"><path d="M0 0h11.300v11.300H0zM12.300 0h11v11.300h-11zM0 12.300h11.300v11H0zM12.300 12.300h11v11h-11z" fill="url(#blue)"/></svg>
    <div class="tsearch"><svg width="14" height="15" viewBox="0 0 14 15"><circle cx="8.300" cy="5.700" r="4.900" fill="none" stroke="#fff" stroke-width="1.500"/><path d="m5 9-4.300 4.800" stroke="#fff" stroke-width="1.600"/></svg>Search</div>
    <div class="apps">
      <span><svg width="24" height="24" viewBox="0 0 24 24"><circle cx="12" cy="12" r="12" fill="url(#edgeB)"/><path d="M.2 10.500A12 12 0 0 1 24 11.500C24 15 21.500 17 18.500 17 15.500 17 14 16 14 15q1.500-1.500 1-4C14.500 8.500 12 7 8.500 7 4.500 7 1.500 8.500.2 10.500z" fill="url(#edgeA)"/><path d="M8 14q0-3.500 3-5-3.500 0-5 3.500C4.500 18 8 22.500 13 24q5 0 9-5-3 1.500-6 1.500Q8.500 20 8 14z" fill="#104a94"/><path d="M14 15q1.500-1.500 1-4-1.200-2-4-2-3 2-3 5 .5 5.500 8 6.500 3 0 6-1.500 1.300-1.700-.5-2.400-4 1.200-7.500-1.600z" fill="#5b532c"/><path d="M8 14q.5 5.500 8 6.500 3 0 6-1.500-4 5-9 5Q7 22 6 16z" fill="#1458a8"/></svg></span>
      <span class="run"><svg width="25" height="23" viewBox="0 0 25 23"><path d="M0 2q0-2 2-2h7l2 3v3H0z" fill="#e0a010"/><path d="M0 5h11l2-2h10q2 0 2 2v14q0 2-2 2H0z" fill="url(#yel)"/><path d="M5 16q0-2 2-2h11q2 0 2 2v7H5z" fill="#0f6cbd"/><path d="M8 17h9v1.500H8z" fill="#0a4c8c"/></svg></span>
      <span><svg width="24" height="24" viewBox="0 0 24 24"><path d="M7 6V1.500h10V6" fill="none" stroke="#1da5e8" stroke-width="2"/><path d="M1 5h22v15q0 3.500-3.500 3.500h-15Q1 23.500 1 20z" fill="#f4f4f4"/><path d="M7.500 9.500h4v4h-4z" fill="#f25022"/><path d="M12.500 9.500h4v4h-4z" fill="#7fba00"/><path d="M7.500 14.500h4v4h-4z" fill="#00a4ef"/><path d="M12.500 14.500h4v4h-4z" fill="#ffb900"/></svg></span>
      <span><svg width="24" height="22" viewBox="0 0 24 22"><path d="M0 7 12 0l12 7v4H0z" fill="#0b5bab"/><path d="M2.500 7h19l-9.500 8z" fill="#f5f5f5"/><path d="M0 7v15h24V7L12 14z" fill="#2aa6ea"/><path d="M0 22 12 13.500 24 22z" fill="#1688dd"/><path d="m24 7-12 7 8 5z" fill="#4cc6f5"/></svg></span>
      <span><svg width="14" height="24" viewBox="0 0 14 24"><path d="M11 0 1.500 7.500 1 10l6 5-4 9 9-8.500.5-2.500-6.500-5z" fill="#fff"/></svg></span>
      <span><svg class="vis" width="24" height="24" viewBox="0 0 24 24"><path d="M0 0h24v24H0z" fill="#fff"/><text x="12" y="15.500" text-anchor="middle" font-family="Open Sans,sans-serif" font-size="19" font-weight="700" fill="#222e3c">a</text><path d="M5 17.500q7 4.500 13.500.4M16.500 17l2.500.2-.7 2.300" fill="none" stroke="#f90" stroke-width="1.400"/></svg></span>
      <span><svg width="24" height="24" viewBox="0 0 24 24"><path d="M0 0h24v24H0z" fill="#0061fe"/><path d="m8.300 6 3.700 2.400-3.700 2.400-3.700-2.400zM15.700 6l3.700 2.400-3.700 2.400L12 8.400zM8.300 10.800l3.700 2.400-3.700 2.400-3.700-2.400zM15.700 10.800l3.700 2.400-3.700 2.400-3.700-2.400zM12 14.200l3.600 2.300L12 18.800l-3.600-2.300z" fill="#fff"/></svg></span>
      <span><svg width="22" height="23" viewBox="0 0 22 23"><path d="M11 0 1.500 5.500Q.5 6 .5 7.500V17l7-3.500V9.500L13 6V1z" fill="url(#m365a)"/><path d="m11 0 9 5.200q1 .8 1 2V13l-6-3V8L9.500 4.500z" fill="url(#m365b)"/><path d="M.5 16.500 7.500 13l3.500 2.500 10-5.500v6q0 1.500-1.200 2.200L11 23l-9-5q-1.500-.7-1.500-1.500z" fill="#a384e6"/></svg></span>
      <span><svg class="vis" width="20" height="24" viewBox="0 0 20 24"><path d="M1 0h15v10h1v6h3v8H7v-7H5v-7H0V3h1z" fill="#151022"/><g font-family="Liberation Sans,sans-serif" font-weight="700" fill="#e4e2ff"><text x="1" y="9" font-size="8" textLength="14">d66</text><text x="6" y="16" font-size="6" textLength="9">mu</text><text x="8" y="23" font-size="6" textLength="10">m6</text></g></svg></span>
      <span><svg width="22" height="22" viewBox="0 0 22 22"><circle cx="11" cy="11" r="11" fill="#1ed760"/><path d="M4.500 7.500q7-2 13.500 1.500M5 11q6-1.500 11.500 1.300M5.500 14.300q5-1.200 9.500 1.200" fill="none" stroke="#15281a" stroke-width="2" stroke-linecap="round"/></svg></span>
      <span><svg width="22" height="22" viewBox="0 0 22 22"><circle cx="11" cy="11" r="11" fill="#fff"/><g stroke-width="2.800" stroke-linecap="round"><path d="M9 4.300v0M9 8.800H4.500" stroke="#36c5f0"/><path d="M13 4.500V9M17.500 9v0" stroke="#2eb67d"/><path d="M13 13.200h4.500M13 17.500v0" stroke="#ecb22e"/><path d="M9 13v4.500M4.500 13v0" stroke="#e01e5a"/></g></svg></span>
      <span><svg width="24" height="24"><use href="#chrome"/></svg></span>
      <span><svg width="24" height="18" viewBox="0 0 24 18"><path d="M4.500 0H24l-4.500 18H0z" fill="#3f7ee8"/><path d="m7 3 6.500 6L5 15M12 15h6" fill="none" stroke="#fff" stroke-width="2"/></svg></span>
      <span class="run"><svg width="24" height="24"><use href="#chrome"/></svg><svg class="bug" width="16" height="16" viewBox="0 0 16 16"><circle cx="8" cy="8" r="8" fill="#f3e27a"/><path d="M6.500 5h3v5L8 12l-1.500-2zM4.500 5.500l2 1M4.500 9.500h2M12.500 3.500l-3 3M11.500 9.500h-2" fill="#713b1a" stroke="#713b1a"/></svg></span>
      <span class="run"><svg width="20" height="23" viewBox="0 0 20 23"><path d="m10 0 10 5.500v11L10 22 0 16.500v-11z" fill="#d0d0d0"/><path d="m10 0 10 5.500L10 11 0 5.500z" fill="#fafafa"/><path d="M10 11v11l10-5.500v-11z" fill="#aaa"/><path d="m10 5 6 3v6l-6 3.500L4 14V8z" fill="#333"/><path d="m5.500 8.500 4.500 2.300 4.500-2.300M10 10.800V16" stroke="#ddd" fill="none" stroke-width="1.500"/></svg></span>
      <span class="run"><svg width="24" height="24" viewBox="0 0 24 24"><path d="m0 5.500 3-1.500v15l-3-1.500z" fill="#5f3696"/><path d="M0 5.500 3 4l15 13.500V24z" fill="#7a49b8"/><path d="M0 17.500 3 19 18 6.500V0z" fill="#9b6ad6"/><path d="m17.500 0 6.500 3v18l-6.500 3z" fill="#c58cf5"/><circle cx="18" cy="17.500" r="6" fill="#1ec6b0"/><path d="M18 14v6.500M15.500 18l2.500 2.700 2.500-2.700" stroke="#fff" fill="none" stroke-width="1.300"/></svg></span>
      <span class="run active"><svg width="22" height="22" viewBox="0 0 22 22"><path d="M0 0h22v22H0z" fill="#0d0d0d"/><svg class="white" x="5" y="5" width="12" height="12"><use href="#unity"/></svg></svg></span>
      <span class="run"><svg width="24" height="24" viewBox="0 0 24 24"><path d="m17.500 0 6.500 3v18l-6.500 3z" fill="#26a6ee"/><path d="M17.500 0 0 15.500l2 2.500L18 6.500z" fill="#0b78c4"/><path d="M17.500 24 0 8.500 2 6l16 11.500z" fill="#1590de"/></svg></span>
    </div>
    <div class="tray">
      <svg class="y1" width="12" height="7" viewBox="0 0 12 7"><path d="m.7 6.300 5.300-5.300 5.300 5.300" fill="none" stroke="#fff" stroke-width="1.200"/></svg>
      <svg class="y2" width="16" height="11" viewBox="0 0 16 11"><path d="M4 10.500A3.500 3.500 0 0 1 3 4a5 5 0 0 1 9-.5 3.500 3.500 0 0 1 1 7z" fill="#aaa797"/><path d="M3 10.500q-2.500-.5-2-3L9.500 5l6 3q0 2.500-2.500 2.500z" fill="#fff"/></svg>
      <svg class="y3" width="16" height="12" viewBox="0 0 16 12"><path d="M.7 4.500q7.300-7.300 14.600 0M3 7q5-4.800 10 0M5.300 9.200q2.700-2.400 5.400 0" fill="none" stroke="#fff" stroke-width="1.300"/><circle cx="8" cy="10.500" r="1.400" fill="#fff"/></svg>
      <svg class="y4" width="16" height="12" viewBox="0 0 16 12"><path d="M.6 4h2.900L7 .8v10.400L3.500 8H.6zM10 3.700l5 5M15 3.700l-5 5" fill="none" stroke="#fff" stroke-width="1.100"/></svg>
      <svg class="y5" width="16" height="10" viewBox="0 0 16 10"><rect x=".6" y=".6" width="12.500" height="8.800" rx="2" fill="none" stroke="#fff" stroke-width="1.200"/><path d="M2.500 2.500h6v5h-6zM14 3.500h1.500v3H14z" fill="#fff"/></svg>
      <div class="clock"><p>9:16 AM</p><p>5/23/2023</p></div>
      <span class="badge">1</span>
    </div>
  </footer>
</div>
</body>
</html>
```
FILE: styles.css
```css
* { box-sizing: border-box; }
body { margin: 0; overflow: hidden; }
svg { display: block; flex: none; }
.defs { position: absolute; }
.vis { overflow: visible; }
p, figure { margin: 0; }
b { font-weight: 400; }
u { text-decoration: none; }
em { font-style: normal; }
strong { font-weight: 600; }

.desktop {
  position: relative; width: 1366px; height: 768px; overflow: hidden;
  display: flex; flex-direction: column; color: #c4c4c4;
  background: linear-gradient(180deg, #b7b46c 0, #b5b069 600px, #87834d 716px);
  font: 12px/16px Inter, "Liberation Sans", sans-serif; white-space: nowrap;
}
.white { color: #fff; }
.bright { color: #d0d0d0; }

/* Editor window peeking out from behind */
.backwin {
  position: absolute; left: 0; top: 700px; width: 620px; height: 20px; overflow: hidden;
  background: #181818; border-bottom: 1px solid #55534a; border-right: 1px solid #55534a;
  display: flex; color: #a0a0a0; font: 10px/22px "Open Sans", sans-serif; letter-spacing: -.4px;
}
.backwin > * { flex: none; }
.remote { width: 24px; background: #0064b4; color: #fff; padding-left: 6px; }
.bw1 { width: 66px; margin-left: 6px; } .bw2 { width: 10px; } .bw3 { width: 242px; letter-spacing: -.9px; }
.bw3, .bw4, .bw5, .bw6, .bw7 { letter-spacing: -.5px; }
.bw4 { width: 55px; } .bw5 { width: 45px; } .bw6 { width: 33px; } .bw7 { width: 29px; }
.bw8 { width: 21px; } .bw9 { width: 47px; } .bw10 { width: 24px; }

.window {
  position: relative; width: 1359px; height: 713px; flex: none; overflow: hidden;
  display: flex; flex-direction: column; background: #191919;
  border: 1px solid #63621b; border-top: 0; border-radius: 8px;
}
.title { height: 31px; background: #5d5b1c; display: flex; align-items: center; padding-left: 9px; flex: none; }
.appicon { width: 14px; height: 14px; background: #111; color: #fff; display: grid; place-items: center; }
.title-text { color: #fff; font: 12px/16px "Open Sans", sans-serif; margin-left: 6px; letter-spacing: -.26px; flex: 1; }
.winbtns { margin-right: 17px; }
.menu { height: 20px; background: #fff; border-bottom: 1px solid #eee; display: flex; color: #000; font: 12px/19px "Open Sans", sans-serif; letter-spacing: -.28px; padding-left: 7px; flex: none; }
.m1 { width: 32px; } .m2 { width: 34px; } .m3 { width: 47px; } .m4 { width: 80px; } .m5 { width: 78px; } .m6 { width: 58px; }

.toolbar { height: 30px; display: flex; align-items: center; padding: 0 9px; flex: none; }
.group { display: flex; gap: 1px; }
.tb { height: 20px; background: #383838; border-radius: 2px; display: flex; align-items: center; justify-content: center; font-size: 13px; letter-spacing: -.25px; }
.w30 { width: 30px; } .w31 { width: 31px; } .w78 { width: 78px; } .w108 { width: 108px; }
.acc { letter-spacing: -.55px; }
.sel { background: #686868; }
.dim { background: #2a2a2a; }
.pivot { width: 62px; margin-left: 9px; gap: 2px; justify-content: flex-start; padding-left: 5px; }
.local { width: 63px; justify-content: flex-start; padding-left: 9px; }
.snap { width: 30px; margin-left: 9px; background: #2a2a2a; }
.play { margin-left: 202px; }
.right { margin-left: auto; gap: 10px; }
.dd { justify-content: space-between; padding: 0 5px; }

.dock { display: flex; gap: 2px; height: 609px; flex: none; }
.leftcol { width: 928px; display: flex; flex-direction: column; gap: 2px; }
.toprow { display: flex; gap: 2px; height: 338px; }
.hier { width: 311px; background: #383838; display: flex; flex-direction: column; }
.scene { width: 615px; display: flex; flex-direction: column; }
.tabs { height: 19px; background: #282828; display: flex; flex: none; }
.tab { background: #3c3c3c; display: flex; align-items: center; height: 19px; padding-top: 2px; border-radius: 3px 3px 0 0; }
.off { background: none; }
.th { width: 95px; padding-left: 8px; gap: 3px; }
.ts { width: 77px; padding-left: 8px; gap: 4px; }
.tg { padding-left: 8px; gap: 3px; }
.tabend { margin-left: auto; display: flex; align-items: center; gap: 10px; padding-right: 11px; }
.bar { height: 21px; background: #3c3c3c; border-bottom: 1px solid #232323; display: flex; align-items: center; flex: none; }
.add { margin-left: 7px; }
.addc { margin-left: 4px; }
.search { height: 16px; background: #2a2a2a; border: 1px solid #212121; border-top-color: #0d0d0d; border-radius: 4px; display: flex; align-items: center; gap: 4px; padding-left: 4px; color: #707070; font-size: 11.5px; }
.hs { width: 265px; margin-left: 12px; }
.hrows { flex: 1; background: linear-gradient(90deg, #2e2e2e 32px, #383838 32px); }
.hrow { height: 16px; display: flex; align-items: center; gap: 4px; }
.lit { background: #4d4d4d; }
.lit2 { background: linear-gradient(90deg, #404040 32px, #4d4d4d 32px); }
.h0 { padding-left: 34px; } .h0 strong { margin-left: 1px; flex: 1; } .rowdots { margin-right: 10px; }
.hrow.h1 { padding-left: 48px; gap: 3.5px; }
.hrow.h2 { padding-left: 75px; gap: 3px; }

.sbar { background: #333; }
.sb { height: 20px; background: #3c3c3c; margin-right: 1px; display: flex; align-items: center; justify-content: center; }
.sb.on { background: #505050; }
.sb i { width: 1px; height: 12px; background: #333; }
.shaded { width: 120px; margin-right: 7px; justify-content: space-between; padding: 0 4px; }
.two { width: 25px; margin-right: 7px; font-weight: 700; font-size: 11px; color: #b0b0b0; }
.lamp, .s25 { width: 25px; }
.two, .lamp, .s25 { padding-right: 2px; }
.s41 { width: 41px; justify-content: space-between; padding: 0 4px 0 5px; }
.s33 { width: 33px; gap: 2px; }
.s34 { width: 34px; gap: 6px; }
.giz { width: 67px; justify-content: space-between; padding: 0 4px 0 3px; }
.ss { width: 147px; margin-left: 7px; }

.project { height: 269px; display: flex; flex-direction: column; }
.tp { width: 80px; padding-left: 7px; gap: 4px; }
.tc { padding-left: 10px; gap: 5px; }
.pl { gap: 6px; }
.pl em { background: #4a4a4a; width: 16px; height: 17px; display: grid; place-items: center; }
.ps { width: 300px; margin: 0 0 0 477px; }
.pbtn { width: 26px; height: 20px; border-left: 1px solid #2c2c2c; display: flex; align-items: center; justify-content: center; padding-right: 2px; }
.ps + .pbtn { margin-left: 2px; }
.pbtn.eye { width: 40px; gap: 1px; padding: 0; }
.pbody { display: flex; flex: 1; min-height: 0; }
.tree { width: 194px; background: #383838; overflow: hidden; padding-top: 1px; }
.tr { height: 16px; display: flex; align-items: center; gap: 4px; }
.t0 { padding-left: 4px; gap: 5px; } .t0 strong { margin-left: -1px; } .t1 { padding-left: 32px; } .t2 { padding-left: 19px; gap: 5px; }
.t2 svg + svg { margin-right: -1px; }
.first { margin-top: 15px; }
.scroll { width: 13px; background: #353535; display: flex; flex-direction: column; align-items: center; padding: 5px 0; }
.thumb { width: 10px; border-radius: 5px; background: #5f5f5f; margin-top: 13px; }
.tt { height: 116px; margin-bottom: auto; }
.assets { flex: 1; background: #333; border-left: 1px solid #1c1c1c; display: flex; flex-direction: column; }
.crumb { height: 21px; background: #3c3c3c; border-bottom: 1px solid #242424; display: flex; align-items: center; gap: 8px; padding-left: 4px; letter-spacing: .1px; }
.tiles { flex: 1; display: flex; gap: 28px; padding: 14px 0 0 23px; }
figure { width: 48px; text-align: center; font-size: 10.2px; }
figcaption { margin: 5px 0 0 -3px; }
.foot { height: 21px; background: #3c3c3c; border-top: 1px solid #262626; display: flex; align-items: center; justify-content: flex-end; padding-right: 15px; }

.insp { width: 427px; display: flex; flex-direction: column; }
.ti { width: 93px; border-top: 2px solid #2c5d87; padding: 0 0 0 9px; gap: 5.5px; }
.il { gap: 11px; }
.ibody { display: flex; height: 590px; }
.icontent { width: 414px; background: #383838; overflow: hidden; color: #bababa; }
.obj { height: 60px; background: #3c3c3c; display: flex; padding: 8px 4px 0 7px; }
.objicon { width: 39px; display: flex; align-items: flex-start; padding-top: 3px; }
.oc { margin: 19px 0 0 -1px; }
.objmain { flex: 1; min-width: 0; }
.o1, .o2 { display: flex; align-items: center; }
.o1 { height: 20px; padding-bottom: 1px; }
.cb { width: 14px; height: 14px; background: #2a2a2a; border: 1px solid #212121; border-top-color: #0d0d0d; border-radius: 3px; display: grid; place-items: center; flex: none; }
.fld { height: 18px; background: #2a2a2a; border: 1px solid #212121; border-top-color: #0d0d0d; border-radius: 3px; color: #d2d2d2; padding-left: 2px; line-height: 17px; }
.o1 .name { width: 278px; margin: 0 3px 0 6px; }
.static { margin: 0 2px 0 4px; letter-spacing: .1px; }
.o2 { height: 18px; margin-top: 5px; }
.drop { height: 17px; background: #515151; border: 1px solid #303030; border-bottom-color: #242424; border-radius: 3px; color: #e0e0e0; display: flex; align-items: center; justify-content: space-between; padding: 0 5px 1px 3px; line-height: 14px; }
.drop svg { color: #c4c4c4; }
.tagd { width: 151px; margin-left: 5px; }
.o2 label { margin-left: -4px; } .o2 .lay { margin-left: 14px; }
.layd { width: 140px; margin-left: 4.5px; }
.comp { height: 22px; background: #3e3e3e; border-top: 1px solid #1a1a1a; border-bottom: 1px solid #303030; display: flex; align-items: center; padding: 0 11px 0 6px; }
.comp > svg:first-child { width: 9px; }
.ci { margin: 0 5px 0 6px; }
.comp .cb { margin-right: 6px; }
.nocb { width: 20px; }
.comp strong { flex: 1; color: #d2d2d2; letter-spacing: .13px; }
.comp strong.tight { letter-spacing: .03px; }
.comp strong + svg { margin-right: 9.5px; }
.comp strong + svg + svg { margin-right: 12.5px; }
.comp svg:last-child { color: #c4c4c4; }
.comp.c2 { border-bottom: 0; }
.comp.last { border-bottom: 1px solid #303030; }
.vecs { height: 70px; padding-top: 3px; }
.vec { height: 20px; display: flex; padding-left: 19px; line-height: 20px; }
.vec label { width: 155px; }
.vec u { width: 11px; }
.vec .fld { width: 65px; margin-right: 4px; }
.vec u:nth-of-type(3) { margin-left: 1px; }
.vec .fld:last-child { margin-right: 0; }
.props { height: 268px; padding: 4px 4px 0 19px; }
.prop { display: flex; height: 20px; line-height: 20px; }
.prop label { width: 154px; }
.prop .fld, .prop .drop { flex: 1; }
.prop .drop { margin-top: 1px; }
.prop .cb { margin-top: 2px; }
.focus label { color: #7ba7ee; }
.focus .fld { border-color: #3a79bb; display: flex; }
.caret { width: 1px; height: 15px; background: #eee; margin-top: 1px; }
.objf { display: flex; justify-content: space-between; }
.objf em { width: 18px; background: #383838; display: grid; place-items: center; }
.fold { margin-left: -11px; align-items: center; color: #d2d2d2; }
.fold svg { margin-right: 3px; }
.mat { height: 56px; background: #3c3c3c; border: solid #1a1a1a; border-width: 1px 0; display: flex; padding: 0 5px 0 7px; }
.swc { width: 49px; padding-top: 9px; }
.swatch { width: 24px; height: 24px; background: #fff; margin-left: 13px; margin-bottom: 6px; }
.matmain { flex: 1; padding-top: 5px; }
.mt { display: flex; align-items: center; height: 17px; color: #a0a0a0; font-size: 12.500px; letter-spacing: .37px; padding-right: 1px; }
.mt span { flex: 1; } .mt svg:last-child { margin: 0 0 0 9px; color: #c4c4c4; }
.ms { display: flex; margin-top: 7px; align-items: center; color: #6e6e6e; }
.ms label { width: 51px; padding-top: 1px; margin-left: -3px; }
.ms .drop { background: #464646; border-color: #404040; color: #8c8c8c; width: 258px; }
.ms .drop svg { color: #888; }
.ms .drop.edit { width: 43px; margin-left: 4px; justify-content: center; padding: 0 0 1px; color: #999; }
.strip { height: 10px; background: #383838; }
.addrow { height: 20px; border-top: 1px solid #1a1a1a; display: flex; justify-content: center; padding-top: 9px; }
.addrow span { width: 228px; background: #585858; border-top: 1px solid #303030; border-radius: 3px 3px 0 0; }
.is .thumb { height: 445px; width: 10px; margin: 7px 0 auto; }
.is { border-left: 1px solid #303030; }

.status { height: 22px; display: flex; justify-content: flex-end; padding-right: 1px; }
.status span { width: 26px; border-left: 1px solid #262626; display: grid; place-items: center; }

.taskbar { margin-top: 7px; height: 48px; background: #5a522d; display: flex; align-items: center; color: #fff; font: 12px/16px "Open Sans", sans-serif; position: relative; }
.weather { display: flex; width: 183px; padding: 1px 0 0 19px; gap: 4px; letter-spacing: -.2px; }
.mc { color: #dedbc8; letter-spacing: -.08px; }
.start { margin-right: 13px; }
.tsearch { width: 100px; height: 32px; border-radius: 16px; background: #696142; display: flex; align-items: center; gap: 6px; padding-left: 23px; letter-spacing: -.15px; }
.apps { display: flex; margin-left: 3px; }
.apps span { width: 44px; height: 40px; display: grid; place-items: center; position: relative; }
.run::after { content: ""; position: absolute; left: 19px; bottom: 1px; width: 6px; height: 3px; border-radius: 2px; background: #a8a48c; }
.active::before { content: ""; position: absolute; inset: 0 2px; border-radius: 4px; background: #6c6444; }
.active svg { position: relative; }
.run.active::after { left: 14px; width: 16px; background: #c4c172; }
.bug { position: absolute; left: 23px; top: 3px; }
.tray { display: flex; align-items: center; margin-left: 19px; }
.y2 { margin-left: 10px; } .y3 { margin-left: 12px; } .y4 { margin-left: 8px; } .y5 { margin-left: 8px; }
.clock { width: 71px; text-align: right; letter-spacing: -.2px; padding-top: 1px; }
.badge { width: 16px; height: 16px; border-radius: 8px; background: #c2c073; color: #222; font-size: 11px; text-align: center; margin-left: 11px; }
```
